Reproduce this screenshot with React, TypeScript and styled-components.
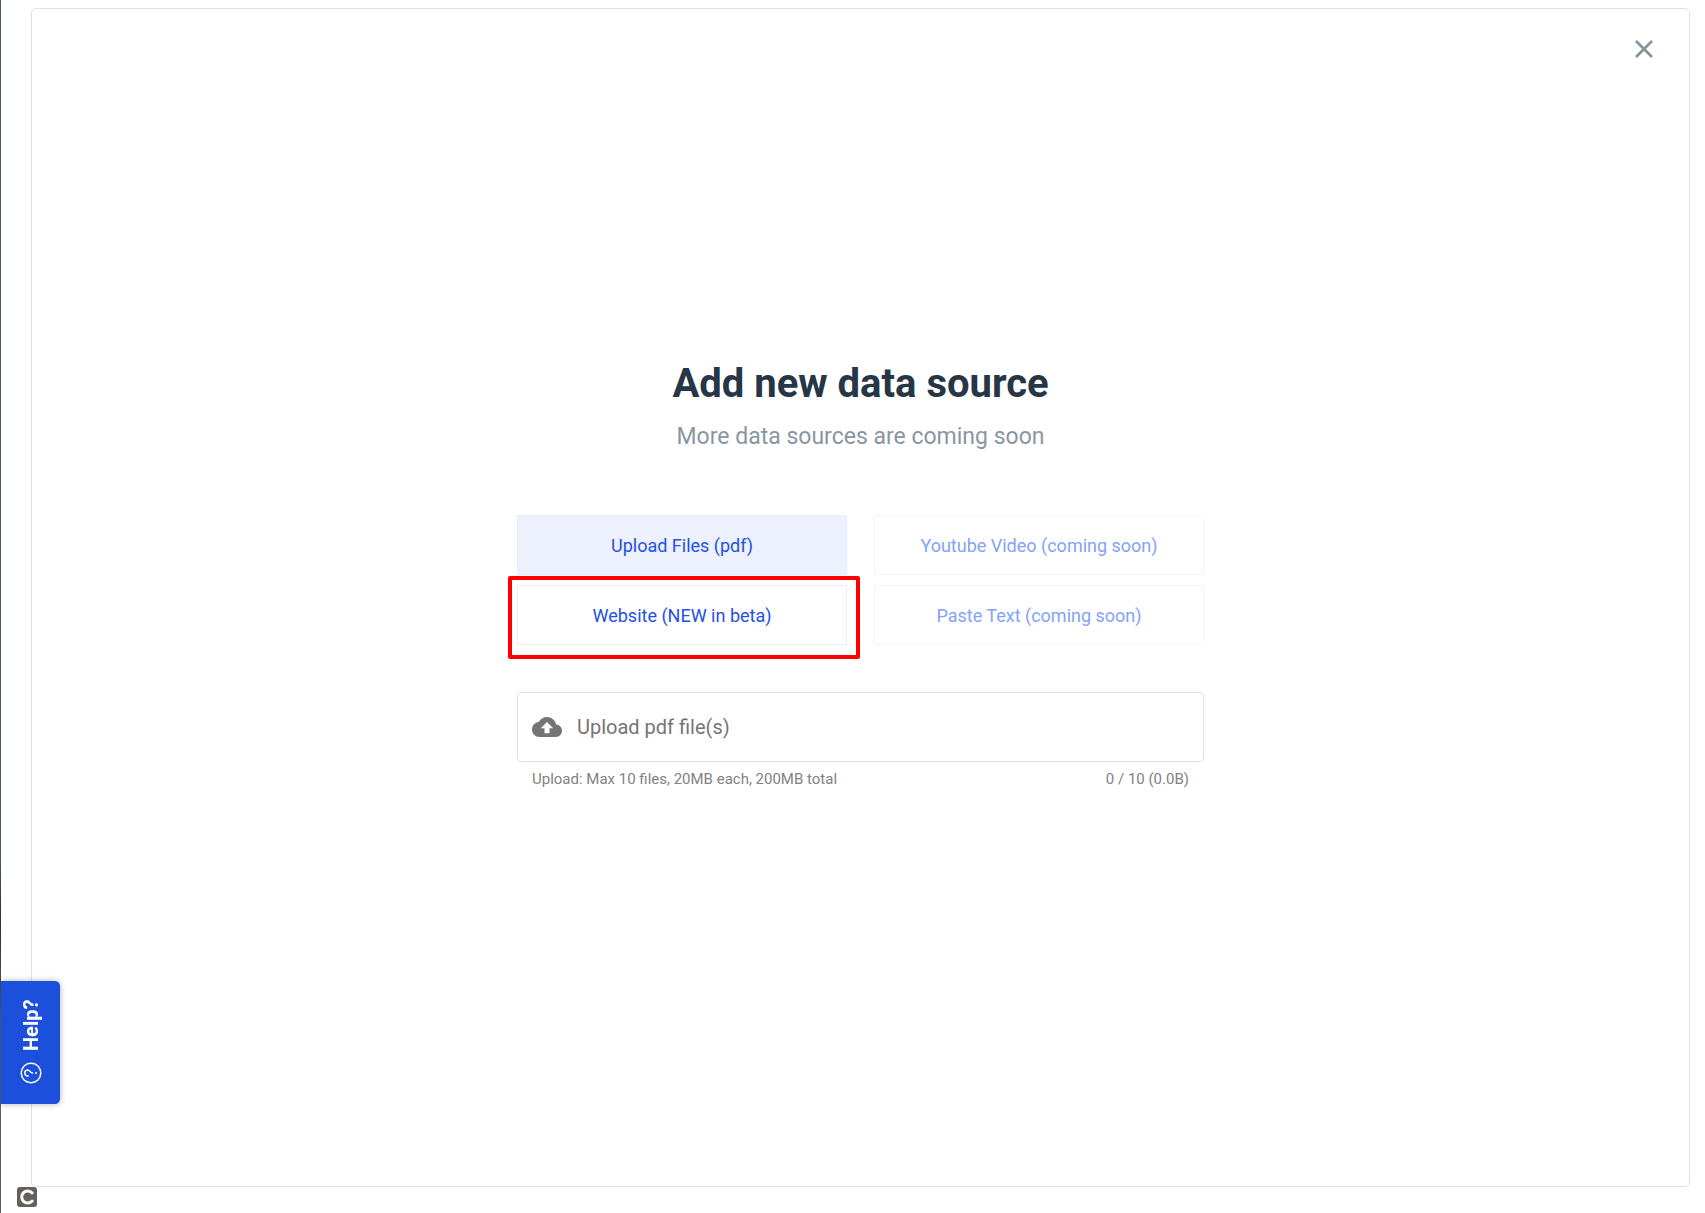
import React, { useState } from "react";
import styled, { createGlobalStyle } from "styled-components";

const GlobalStyle = createGlobalStyle`
  *, *::before, *::after { box-sizing: border-box; }
  body {
    margin: 0;
    background: #ffffff;
    font-family: Roboto, "Liberation Sans", sans-serif;
  }
  button { font-family: inherit; cursor: pointer; }
`;

const Page = styled.div`
  display: grid;
  grid-template-columns: 1px minmax(0, 1fr);
  min-height: 100vh;
`;

const Edge = styled.div`
  background: linear-gradient(#44586e 0%, #44586e 71%, #33302e 76%, #5f615c 84%, #5a6160 100%);
`;

const Main = styled.main`
  display: flex;
  flex-direction: column;
  padding: 8px 15px 6px 16px;
`;

const Panel = styled.section`
  flex: 1;
  display: flex;
  flex-direction: column;
  margin-left: 14px;
  border: 1px solid #e0e2ea;
  border-radius: 5px;
`;

const PanelHeader = styled.header`
  display: flex;
  justify-content: flex-end;
  padding: 20px 25px 0 0;
`;

const CloseButton = styled.button`
  display: grid;
  place-items: center;
  width: 40px;
  height: 40px;
  padding: 0;
  border: 0;
  background: none;
  color: #84929c;
`;

const Content = styled.div`
  flex: 1;
  display: flex;
  flex-direction: column;
  justify-content: center;
  width: 100%;
  max-width: 687px;
  margin: 0 auto;
  padding-bottom: 105px;
`;

const Title = styled.h1`
  margin: 0;
  color: #263646;
  font-size: 40px;
  line-height: 48px;
  font-weight: 700;
  text-align: center;
`;

const Subtitle = styled.p`
  margin: 13px 0 62px;
  color: #8a969f;
  font-size: 23px;
  line-height: 32px;
  text-align: center;
`;

const Options = styled.div`
  display: grid;
  grid-template-columns: 1fr 1fr;
  gap: 10px 27px;
`;

const OptionCell = styled.div`
  position: relative;
  display: grid;
`;

const Option = styled.button<{ $active?: boolean }>`
  height: 60px;
  padding: 1px 16px 0;
  border: 1px solid #e7ecff;
  background: ${(p) => (p.$active ? "#edf1fe" : "#ffffff")};
  color: #2350e6;
  font-size: 18px;
  line-height: 24px;

  &:disabled {
    border-color: #f1f4ff;
    color: #84a2fa;
    cursor: default;
  }
`;

const Highlight = styled.span`
  position: absolute;
  inset: -9px -13px -14px -9px;
  border: 4px solid #ff0000;
  border-radius: 2px;
  pointer-events: none;
`;

const FileField = styled.label`
  display: flex;
  align-items: center;
  gap: 15px;
  height: 70px;
  margin-top: 47px;
  padding: 0 14px;
  border: 1px solid #dfe2ea;
  border-radius: 4px;
  color: #757575;
  font-size: 20px;
  line-height: 24px;
  cursor: pointer;
`;

const FileInput = styled.input`
  position: absolute;
  width: 1px;
  height: 1px;
  opacity: 0;
`;

const Hints = styled.div`
  display: flex;
  justify-content: space-between;
  padding: 6px 15px 0;
  color: #828282;
  font-size: 15px;
  line-height: 22px;
`;

const HelpButton = styled.button`
  position: fixed;
  left: 1px;
  bottom: 109px;
  display: flex;
  align-items: center;
  justify-content: center;
  gap: 11px;
  width: 59px;
  height: 123px;
  padding: 2px 2px 0 0;
  border: 0;
  border-radius: 5px 0 0 5px;
  background: #1c4fdb;
  box-shadow: 0 0 6px rgba(0, 0, 0, 0.3);
  color: #ffffff;
  font-size: 20px;
  line-height: 24px;
  font-weight: 700;
  writing-mode: vertical-rl;
  transform: rotate(180deg);
`;

const Brand = styled.footer`
  display: flex;
`;

function CloseIcon() {
  return (
    <svg width="18" height="18" viewBox="0 0 18 18" fill="none" stroke="currentColor" strokeWidth="2.6" aria-hidden="true">
      <path d="M1 1L17 17M17 1L1 17" />
    </svg>
  );
}

function CloudUploadIcon() {
  return (
    <svg width="30" height="30" viewBox="0 0 24 24" fill="currentColor" aria-hidden="true">
      <path d="M19.35 10.04C18.67 6.59 15.64 4 12 4 9.11 4 6.6 5.64 5.35 8.04 2.34 8.36 0 10.91 0 14c0 3.31 2.69 6 6 6h13c2.76 0 5-2.24 5-5 0-2.64-2.05-4.78-4.65-4.96zM14 13v4h-4v-4H7l5-5 5 5h-3z" />
    </svg>
  );
}

function HelpIcon() {
  return (
    <svg width="22" height="22" viewBox="0 0 22 22" fill="none" stroke="currentColor" strokeLinecap="round" aria-hidden="true">
      <g transform="rotate(90 11 11)">
        <circle cx="11" cy="11" r="9.8" strokeWidth="1.4" />
        <path d="M8 8.2C8 6 9.4 4.8 11 4.8S14 6 14 7.8C14 10 11 10 11 12.6" strokeWidth="1.5" />
        <circle cx="11" cy="16" r="1" fill="currentColor" stroke="none" />
      </g>
    </svg>
  );
}

function BrandIcon() {
  return (
    <svg width="20" height="20" viewBox="0 0 20 20" role="img" aria-label="Brand">
      <rect width="20" height="20" rx="3" fill="#606060" />
      <path d="M15.2 6A6 6 0 1 0 15.2 14" fill="none" stroke="#fff8e8" strokeWidth="3" strokeLinecap="round" />
    </svg>
  );
}

const options = [
  { label: "Upload Files (pdf)" },
  { label: "Youtube Video (coming soon)", disabled: true },
  { label: "Website (NEW in beta)", highlighted: true },
  { label: "Paste Text (coming soon)", disabled: true },
];

export default function App() {
  const [selected, setSelected] = useState(options[0].label);

  return (
    <>
      <GlobalStyle />
      <Page>
        <Edge />
        <Main>
          <Panel>
            <PanelHeader>
              <CloseButton type="button" aria-label="Close">
                <CloseIcon />
              </CloseButton>
            </PanelHeader>
            <Content>
              <Title>Add new data source</Title>
              <Subtitle>More data sources are coming soon</Subtitle>
              <Options>
                {options.map((o) => (
                  <OptionCell key={o.label}>
                    <Option
                      type="button"
                      $active={o.label === selected}
                      disabled={o.disabled}
                      onClick={() => setSelected(o.label)}
                    >
                      {o.label}
                    </Option>
                    {o.highlighted && <Highlight />}
                  </OptionCell>
                ))}
              </Options>
              <FileField htmlFor="pdf-files">
                <CloudUploadIcon />
                <span>Upload pdf file(s)</span>
                <FileInput id="pdf-files" type="file" accept="application/pdf" multiple />
              </FileField>
              <Hints>
                <span>Upload: Max 10 files, 20MB each, 200MB total</span>
                <span>0 / 10 (0.0B)</span>
              </Hints>
            </Content>
          </Panel>
          <Brand>
            <BrandIcon />
          </Brand>
        </Main>
      </Page>
      <HelpButton type="button">
        <HelpIcon />
        <span>Help?</span>
      </HelpButton>
    </>
  );
}
